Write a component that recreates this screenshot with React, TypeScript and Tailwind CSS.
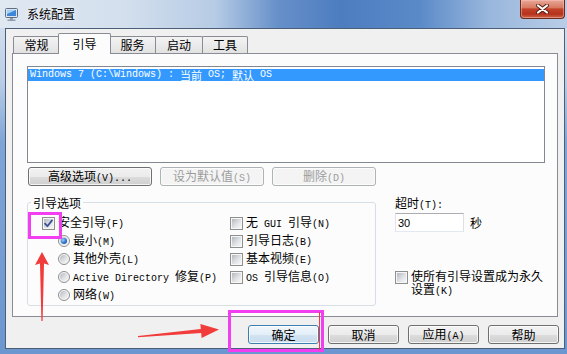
import type { ReactNode } from "react";

// CJK runs get the sans face at 12px, everything else the small mono face
const CJK = /([\u3000-\u9fff\uff00-\uffef]+)/;
const cjkCls = "font-[family-name:'Noto_Sans_CJK_SC',sans-serif] text-[12px]";
const monoCls = "font-[family-name:'Liberation_Mono','Noto_Sans_CJK_SC',monospace] text-[10px]";

function Txt({ s }: { s: string }) {
  return (
    <>
      {s
        .split(CJK)
        .filter(Boolean)
        .map((part, i) => (
          <span key={i} className={CJK.test(part) ? cjkCls : monoCls}>
            {part}
          </span>
        ))}
    </>
  );
}

function Check({ on = false }: { on?: boolean }) {
  return (
    <span className="relative flex h-[13px] w-[13px] shrink-0 items-center justify-center border border-[#8e8f8f] bg-[#f6f6f6]">
      <span className="h-[9px] w-[9px] bg-[linear-gradient(135deg,#b4b9bf_0%,#dfe2e5_55%,#f7f7f7_100%)]" />
      {on && (
        <svg className="absolute left-0 top-0" width="11" height="11" viewBox="0 0 11 11">
          <path d="M2 5.6 L4.4 8.2 L9 2.4" fill="none" stroke="#3a5194" strokeWidth="1.8" strokeLinecap="round" strokeLinejoin="round" />
        </svg>
      )}
    </span>
  );
}

function Radio({ on = false }: { on?: boolean }) {
  return (
    <span className="flex h-[12px] w-[12px] shrink-0 items-center justify-center rounded-full border border-[#8e8f8f] bg-[#f6f6f6]">
      <span className="flex h-[8px] w-[8px] items-center justify-center rounded-full bg-[linear-gradient(135deg,#b4b9bf_0%,#e2e4e7_60%,#f7f7f7_100%)]">
        {on && <span className="h-[6px] w-[6px] rounded-full bg-[radial-gradient(circle_at_35%_35%,#9ad0f7_0%,#2b6fd0_55%,#173f8c_100%)]" />}
      </span>
    </span>
  );
}

function Btn({
  children,
  className = "",
  disabled = false,
  primary = false,
}: {
  children: string;
  className?: string;
  disabled?: boolean;
  primary?: boolean;
}) {
  const skin = disabled
    ? "border-[#adb2b5] bg-[#f4f4f4] text-[#9c9c9c]"
    : primary
      ? "border-[#3c7fb1] bg-[linear-gradient(180deg,#f1f7fc_0%,#e3eef7_50%,#d3e4f2_51%,#c8dced_100%)] text-black"
      : "border-[#707070] bg-[linear-gradient(180deg,#f2f2f2_0%,#ebebeb_50%,#dddddd_51%,#cfcfcf_100%)] text-black";
  return (
    <div
      className={`flex h-[19px] items-center justify-center rounded-[3px] border leading-[14px] shadow-[inset_0_0_0_1px_rgba(255,255,255,0.75)] ${skin} ${className}`}
    >
      <span>
        <Txt s={children} />
      </span>
    </div>
  );
}

function Tab({ children, className = "" }: { children: ReactNode; className?: string }) {
  return (
    <div
      className={`flex h-[17px] items-center justify-center rounded-t-[2px] border border-b-0 border-[#898c95] bg-[linear-gradient(180deg,#f3f3f3,#e2e2e2)] ${className}`}
    >
      {children}
    </div>
  );
}

function TitleBar() {
  return (
    <div className="flex h-[28px] shrink-0 items-start bg-[linear-gradient(90deg,#e0e8f2_0%,#d3dfed_22%,#b6cbe5_38%,#6790c9_49%,#4d7dc0_60%,#5b8ac8_74%,#98b6dc_86%,#b9cde7_100%)]">
      <svg className="ml-[5px] mt-[8px]" width="14" height="14" viewBox="0 0 14 14">
        <rect x="0.5" y="0.5" width="12" height="9" rx="1" fill="#dfe5ec" stroke="#5d6f86" />
        <rect x="2" y="2" width="9" height="6" fill="#3f86d8" />
        <path d="M2 2 H11 L2 6 Z" fill="#9fd2f7" />
        <path d="M5 10 H8 V11.5 H10.5 V13 H2.5 V11.5 H5 Z" fill="#8f9cad" />
      </svg>
      <span className="ml-[8px] mt-[6px] font-[family-name:'Noto_Sans_CJK_SC',sans-serif] text-[12px] leading-[16px] text-black [text-shadow:0_0_6px_#ffffff]">
        系统配置
      </span>
      <div className="ml-auto mr-[2px] flex h-[19px] w-[45px] items-center justify-center rounded-b-[4px] border border-t-0 border-[#6b2a1e] bg-[linear-gradient(180deg,#e7a898_0%,#d97a62_42%,#c3432a_50%,#b5311b_78%,#cf6648_100%)] shadow-[inset_0_0_0_1px_rgba(255,200,190,0.45)]">
        <svg width="15" height="10" viewBox="0 0 15 10">
          <path d="M3 1.5 L12 8.5 M12 1.5 L3 8.5" stroke="#5c1c12" strokeWidth="4" strokeLinecap="round" />
          <path d="M3 1.5 L12 8.5 M12 1.5 L3 8.5" stroke="#ffffff" strokeWidth="2.2" strokeLinecap="round" />
        </svg>
      </div>
    </div>
  );
}

function Tabs() {
  return (
    <div className="flex h-[20px] items-end pl-[7px] leading-[14px]">
      <Tab className="w-[47px]">
        <Txt s="常规" />
      </Tab>
      <div className="relative z-10 -mx-[2px] -mb-[1px] flex h-[21px] w-[53px] items-center justify-center rounded-t-[2px] border border-b-0 border-[#898c95] bg-[#fcfcfc]">
        <Txt s="引导" />
      </div>
      <Tab className="w-[47px]">
        <Txt s="服务" />
      </Tab>
      <Tab className="-ml-[1px] w-[48px]">
        <Txt s="启动" />
      </Tab>
      <Tab className="-ml-[1px] w-[46px]">
        <Txt s="工具" />
      </Tab>
    </div>
  );
}

const leftRows: { label: string; kind: "check" | "radio"; on?: boolean }[] = [
  { label: "安全引导(F)", kind: "check", on: true },
  { label: "最小(M)", kind: "radio", on: true },
  { label: "其他外壳(L)", kind: "radio" },
  { label: "Active Directory 修复(P)", kind: "radio" },
  { label: "网络(W)", kind: "radio" },
];

const rightRows = ["无 GUI 引导(N)", "引导日志(B)", "基本视频(E)", "OS 引导信息(O)", ""];

function BootOptions() {
  return (
    <fieldset className="h-[111px] w-[349px] shrink-0 rounded-[3px] border border-[#d5dfe5] p-0">
      <legend className="ml-[3px] px-[2px] leading-[14px]">
        <Txt s="引导选项" />
      </legend>
      <div className="grid grid-cols-[188px_1fr] auto-rows-[18px] pl-[14px] pt-[4px] leading-[14px]">
        {leftRows.map((row, i) => (
          <>
            <div key={`l${i}`} className={`flex items-center gap-[3px] ${row.kind === "radio" ? "pl-[16px]" : ""}`}>
              {row.kind === "check" ? <Check on={row.on} /> : <Radio on={row.on} />}
              <span className="whitespace-pre">
                <Txt s={row.label} />
              </span>
            </div>
            <div key={`r${i}`} className="flex items-center gap-[3px]">
              {rightRows[i] && (
                <>
                  <Check />
                  <span className="whitespace-pre">
                    <Txt s={rightRows[i]} />
                  </span>
                </>
              )}
            </div>
          </>
        ))}
      </div>
    </fieldset>
  );
}

function Panel() {
  return (
    <div className="ml-[6px] flex h-[264px] w-[546px] flex-col border border-[#898c95] bg-[#fcfcfc] pl-[14px]">
      <div className="mt-[12px] h-[97px] w-[518px] border border-[#828790] bg-white pt-[2px]">
        <div className="flex h-[12px] items-center whitespace-pre bg-[#3399ff] pl-[2px] leading-[12px] text-white">
          <span className={monoCls}>{"Windows 7 (C:\\Windows) : "}</span>
          <span className="font-[family-name:'Noto_Sans_CJK_SC',sans-serif] text-[11px]">当前</span>
          <span className={monoCls}>{" OS; "}</span>
          <span className="font-[family-name:'Noto_Sans_CJK_SC',sans-serif] text-[11px]">默认</span>
          <span className={monoCls}>{" OS"}</span>
        </div>
      </div>

      <div className="ml-[1px] mt-[4px] flex gap-[8px]">
        <Btn className="w-[124px]">高级选项(V)...</Btn>
        <Btn className="w-[104px]" disabled>
          设为默认值(S)
        </Btn>
        <Btn className="w-[104px]" disabled>
          删除(D)
        </Btn>
      </div>

      <div className="mt-[9px] flex items-start">
        <BootOptions />
        <div className="ml-[19px] flex flex-col leading-[14px]">
          <div>
            <Txt s="超时(T):" />
          </div>
          <div className="flex items-center">
            <div className="flex h-[19px] w-[69px] items-center border border-[#abadb3] border-b-[#e3e9ef] border-l-[#e2e3ea] border-r-[#dbdfe6] bg-white pl-[2px] font-[family-name:'Liberation_Sans',sans-serif] text-[11px]">
              30
            </div>
            <span className="ml-[6px]">
              <Txt s="秒" />
            </span>
          </div>
          <div className="mt-[37px] flex items-start gap-[3px]">
            <span className="mt-[2px]">
              <Check />
            </span>
            <div className="w-[134px] leading-[13px]">
              <Txt s="使所有引导设置成为永久设置(K)" />
            </div>
          </div>
        </div>
      </div>
    </div>
  );
}

// the red arrows and magenta boxes drawn over the screenshot
function Annotations() {
  return (
    <svg className="pointer-events-none absolute left-0 top-0" width="567" height="354" viewBox="0 0 567 354">
      <rect x="29.5" y="213.5" width="31" height="24" fill="none" stroke="#f23df0" strokeWidth="3" />
      <rect x="229.5" y="311.5" width="93" height="39" fill="none" stroke="#f23df0" strokeWidth="3" />
      <line x1="319.5" y1="312" x2="319.5" y2="350" stroke="#e8403a" strokeWidth="1" />
      <polygon points="42,252 49,265 44,263.5 42.6,321 41.4,321 40,263.5 35,265" fill="#f23b3b" />
      <polygon points="138,335.9 200.8,329.1 200.4,324.1 219,329.5 201.6,338.1 201.2,333.1 138,337.2" fill="#f23b3b" />
    </svg>
  );
}

export default function App() {
  return (
    <div className="relative flex h-[354px] w-[567px] flex-col overflow-hidden bg-[linear-gradient(180deg,#dbe5f1_0%,#bccfe7_22%,#7fa5d7_40%,#6c96cf_100%)] text-black">
      <TitleBar />
      <div className="mb-[5px] ml-[5px] mr-[2px] flex flex-1 flex-col border border-[#4c5f79] bg-[#f0f0f0] pt-[4px]">
        <Tabs />
        <Panel />
        <div className="mt-[8px] flex justify-end gap-[9px] pr-[5px]">
          <Btn className="w-[71px]" primary>
            确定
          </Btn>
          <Btn className="w-[71px]">取消</Btn>
          <Btn className="w-[71px]">应用(A)</Btn>
          <Btn className="w-[71px]">帮助</Btn>
        </div>
      </div>
      <Annotations />
    </div>
  );
}
